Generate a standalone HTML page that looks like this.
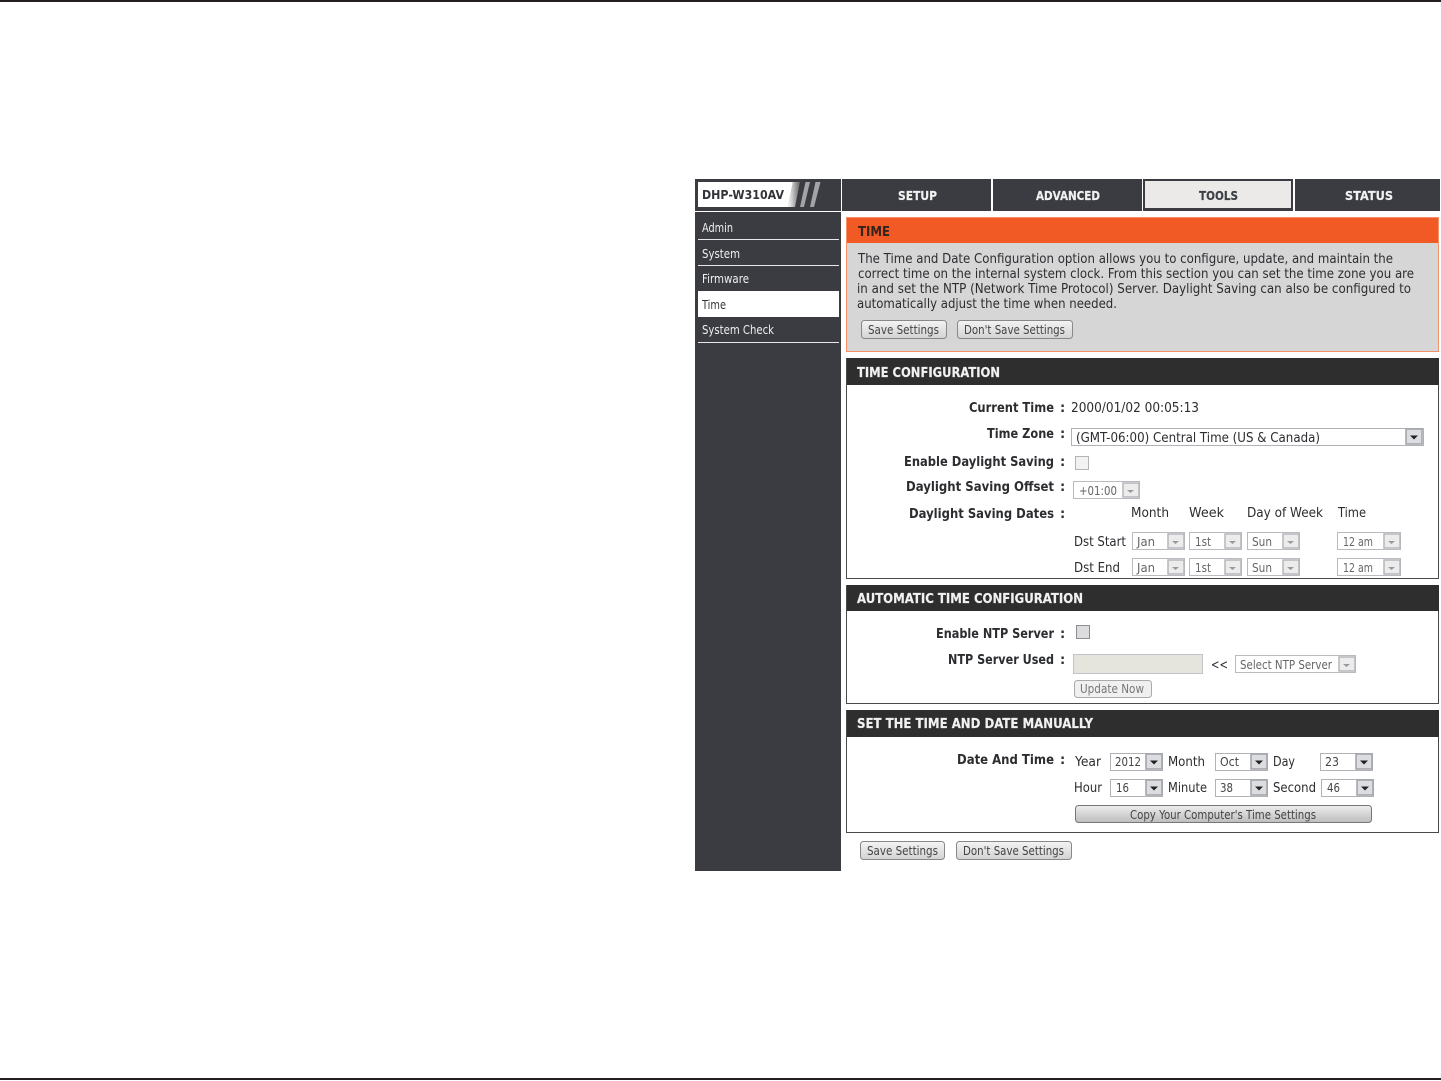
<!DOCTYPE html>
<html><head><meta charset="utf-8"><style>
html,body{margin:0;padding:0;background:#fff;width:1441px;height:1081px;overflow:hidden}
svg{display:block}
text{font-family:"DejaVu Sans","Liberation Sans",sans-serif;white-space:pre}
.b{font-size:13px;fill:#2c2d30}
.l{font-size:13px;font-weight:bold;fill:#2c2d30;text-anchor:start}
.h{font-size:13px;font-weight:bold;fill:#f1f1f1;stroke:#f1f1f1;stroke-width:.2}
.t{font-size:12px;font-weight:bold;fill:#f1f1f1;stroke:#f1f1f1;stroke-width:.2}
.n{font-size:12px;fill:#f0f0f0}
.s{font-size:12px;fill:#444}
.g{font-size:12px;fill:#666}
.dis{fill:#777;font-size:12px}
</style></head><body>
<svg width="1441" height="1081" viewBox="0 0 1441 1081" xmlns="http://www.w3.org/2000/svg">
<defs>
<linearGradient id="bt" x1="0" y1="0" x2="0" y2="1"><stop offset="0" stop-color="#f4f4f4"/><stop offset="1" stop-color="#d2d2d2"/></linearGradient>
<linearGradient id="bt2" x1="0" y1="0" x2="0" y2="1"><stop offset="0" stop-color="#ededed"/><stop offset="1" stop-color="#bdbdbd"/></linearGradient>
<linearGradient id="fade" x1="0" y1="0" x2="1" y2="0"><stop offset="0" stop-color="#fff"/><stop offset="1" stop-color="#666"/></linearGradient>
<g id="dd"><rect x="1" y="1" width="16" height="15" fill="#dcdde0" stroke="#a4a6ab" stroke-width="1.600"/><path d="M5 7.500h8l-4 4z" fill="#222"/></g>
<g id="dl"><rect x="1" y="1" width="16" height="14" fill="#ececec" stroke="#b4b6bb" stroke-width="1.500"/><path d="M5 8h7l-3.500 3z" fill="#999"/></g>
</defs>
<rect x="0" y="0" width="1441" height="2" fill="#231f20"/>
<rect x="0" y="1078" width="1441" height="2" fill="#231f20"/>

<!-- header -->
<rect x="695" y="179" width="146" height="32" fill="#3a3c41"/>
<path d="M698 182H793L788 207H698z" fill="#fff"/>
<path d="M793 182L800 182L795 207L788 207z" fill="url(#fade)"/>
<path d="M805.500 182h4.500l-6 25h-4zM815.500 182h5l-6.500 25h-4z" fill="#a3a4a7"/>
<text x="702" y="199" textLength="82" lengthAdjust="spacingAndGlyphs" style="font-size:12px;font-weight:bold;fill:#33343a">DHP-W310AV</text>
<rect x="842" y="179" width="149" height="32" fill="#3a3c41"/>
<rect x="993" y="179" width="149" height="32" fill="#3a3c41"/>
<rect x="1143" y="179" width="150" height="32" fill="#3a3c41"/>
<rect x="1145" y="181" width="146" height="27" fill="#eceae8"/>
<rect x="1295" y="179" width="145" height="32" fill="#3a3c41"/>
<text class="t" x="898" y="200" textLength="39" lengthAdjust="spacingAndGlyphs">SETUP</text>
<text class="t" x="1036" y="200" textLength="64" lengthAdjust="spacingAndGlyphs">ADVANCED</text>
<text class="t" x="1199" y="200" textLength="39" lengthAdjust="spacingAndGlyphs" style="fill:#3c3f46;stroke:#3c3f46">TOOLS</text>
<text class="t" x="1345" y="200" textLength="48" lengthAdjust="spacingAndGlyphs">STATUS</text>

<!-- sidebar -->
<rect x="695" y="212" width="146" height="659" fill="#3a3c41"/>
<rect x="698" y="239" width="141" height="1" fill="#e8e8e8"/>
<rect x="698" y="265" width="141" height="1" fill="#e8e8e8"/>
<rect x="698" y="291" width="141" height="26" fill="#fff"/>
<rect x="698" y="342" width="141" height="1" fill="#e8e8e8"/>
<text class="n" x="702" y="232" textLength="31" lengthAdjust="spacingAndGlyphs">Admin</text>
<text class="n" x="702" y="258" textLength="38" lengthAdjust="spacingAndGlyphs">System</text>
<text class="n" x="702" y="283" textLength="47" lengthAdjust="spacingAndGlyphs">Firmware</text>
<text class="n" x="702" y="309" textLength="24" lengthAdjust="spacingAndGlyphs" style="fill:#33353a">Time</text>
<text class="n" x="702" y="334" textLength="72" lengthAdjust="spacingAndGlyphs">System Check</text>

<!-- TIME box -->
<rect x="846" y="217" width="593" height="135" fill="#d6d6d6"/>
<rect x="846.500" y="217.500" width="592" height="134" fill="none" stroke="#f4916a"/>
<rect x="847" y="218" width="591" height="25" fill="#f15a24"/>
<text x="858" y="236" textLength="32" lengthAdjust="spacingAndGlyphs" style="font-size:13px;font-weight:bold;fill:#33241e">TIME</text>
<text class="b" x="858" y="263" textLength="535" lengthAdjust="spacingAndGlyphs">The Time and Date Configuration option allows you to configure, update, and maintain the</text>
<text class="b" x="858" y="278" textLength="556" lengthAdjust="spacingAndGlyphs">correct time on the internal system clock. From this section you can set the time zone you are</text>
<text class="b" x="857" y="293" textLength="554" lengthAdjust="spacingAndGlyphs">in and set the NTP (Network Time Protocol) Server. Daylight Saving can also be configured to</text>
<text class="b" x="857" y="308" textLength="260" lengthAdjust="spacingAndGlyphs">automatically adjust the time when needed.</text>

<rect x="861.500" y="320.500" width="85" height="18" rx="3" fill="url(#bt)" stroke="#888"/>
<text class="s" x="868" y="334" textLength="71" lengthAdjust="spacingAndGlyphs">Save Settings</text>
<rect x="957.500" y="320.500" width="115" height="18" rx="3" fill="url(#bt)" stroke="#888"/>
<text class="s" x="964" y="334" textLength="101" lengthAdjust="spacingAndGlyphs">Don't Save Settings</text>

<!-- TIME CONFIGURATION -->
<rect x="846.500" y="358.500" width="592" height="220" fill="#fff" stroke="#4a4a4a"/>
<rect x="847" y="358" width="592" height="27" fill="#2e2e2e"/>
<text class="h" x="857" y="377" textLength="143" lengthAdjust="spacingAndGlyphs">TIME CONFIGURATION</text>
<text class="l" x="969" y="412" textLength="85" lengthAdjust="spacingAndGlyphs">Current Time</text>
<text class="l" x="1060" y="412">:</text>
<text class="l" x="987" y="438" textLength="67" lengthAdjust="spacingAndGlyphs">Time Zone</text>
<text class="l" x="1060" y="438">:</text>
<text class="l" x="904" y="466" textLength="150" lengthAdjust="spacingAndGlyphs">Enable Daylight Saving</text>
<text class="l" x="1060" y="466">:</text>
<text class="l" x="906" y="491" textLength="148" lengthAdjust="spacingAndGlyphs">Daylight Saving Offset</text>
<text class="l" x="1060" y="491">:</text>
<text class="l" x="909" y="518" textLength="145" lengthAdjust="spacingAndGlyphs">Daylight Saving Dates</text>
<text class="l" x="1060" y="518">:</text>
<text class="b" x="1071" y="412" textLength="128" lengthAdjust="spacingAndGlyphs">2000/01/02 00:05:13</text>

<rect x="1071.500" y="428.500" width="352" height="17" fill="#fff" stroke="#b0b2b8"/>
<text class="b" x="1076" y="442" textLength="244" lengthAdjust="spacingAndGlyphs">(GMT-06:00) Central Time (US &amp; Canada)</text>
<use href="#dd" x="1405" y="428"/>
<rect x="1075.500" y="456.500" width="13" height="13" fill="#f2f2f2" stroke="#b4b4b4"/>

<rect x="1073.500" y="481.500" width="66" height="17" fill="#fff" stroke="#b9bbc0"/>
<text class="g" x="1079" y="495" textLength="38" lengthAdjust="spacingAndGlyphs">+01:00</text>
<use href="#dl" x="1122" y="482"/>

<text class="b" x="1131" y="517" textLength="38" lengthAdjust="spacingAndGlyphs">Month</text>
<text class="b" x="1189" y="517" textLength="35" lengthAdjust="spacingAndGlyphs">Week</text>
<text class="b" x="1247" y="517" textLength="76" lengthAdjust="spacingAndGlyphs">Day of Week</text>
<text class="b" x="1338" y="517" textLength="28" lengthAdjust="spacingAndGlyphs">Time</text>
<text class="b" x="1074" y="546" textLength="52" lengthAdjust="spacingAndGlyphs">Dst Start</text>
<text class="b" x="1074" y="572" textLength="46" lengthAdjust="spacingAndGlyphs">Dst End</text>

<g>
<rect x="1132.500" y="532.500" width="52" height="17" fill="#fff" stroke="#b9bbc0"/><text class="g" x="1137" y="546" textLength="18" lengthAdjust="spacingAndGlyphs">Jan</text><use href="#dl" x="1167" y="533"/>
<rect x="1189.500" y="532.500" width="52" height="17" fill="#fff" stroke="#b9bbc0"/><text class="g" x="1195" y="546" textLength="16" lengthAdjust="spacingAndGlyphs">1st</text><use href="#dl" x="1224" y="533"/>
<rect x="1247.500" y="532.500" width="52" height="17" fill="#fff" stroke="#b9bbc0"/><text class="g" x="1252" y="546" textLength="20" lengthAdjust="spacingAndGlyphs">Sun</text><use href="#dl" x="1282" y="533"/>
<rect x="1337.500" y="532.500" width="63" height="17" fill="#fff" stroke="#b9bbc0"/><text class="g" x="1343" y="546" textLength="30" lengthAdjust="spacingAndGlyphs">12 am</text><use href="#dl" x="1383" y="533"/>
<rect x="1132.500" y="558.500" width="52" height="17" fill="#fff" stroke="#b9bbc0"/><text class="g" x="1137" y="572" textLength="18" lengthAdjust="spacingAndGlyphs">Jan</text><use href="#dl" x="1167" y="559"/>
<rect x="1189.500" y="558.500" width="52" height="17" fill="#fff" stroke="#b9bbc0"/><text class="g" x="1195" y="572" textLength="16" lengthAdjust="spacingAndGlyphs">1st</text><use href="#dl" x="1224" y="559"/>
<rect x="1247.500" y="558.500" width="52" height="17" fill="#fff" stroke="#b9bbc0"/><text class="g" x="1252" y="572" textLength="20" lengthAdjust="spacingAndGlyphs">Sun</text><use href="#dl" x="1282" y="559"/>
<rect x="1337.500" y="558.500" width="63" height="17" fill="#fff" stroke="#b9bbc0"/><text class="g" x="1343" y="572" textLength="30" lengthAdjust="spacingAndGlyphs">12 am</text><use href="#dl" x="1383" y="559"/>
</g>

<!-- AUTOMATIC -->
<rect x="846.500" y="585.500" width="592" height="118" fill="#fff" stroke="#4a4a4a"/>
<rect x="847" y="585" width="592" height="26" fill="#2e2e2e"/>
<text class="h" x="857" y="603" textLength="226" lengthAdjust="spacingAndGlyphs">AUTOMATIC TIME CONFIGURATION</text>
<text class="l" x="936" y="638" textLength="118" lengthAdjust="spacingAndGlyphs">Enable NTP Server</text>
<text class="l" x="1060" y="638">:</text>
<text class="l" x="948" y="664" textLength="106" lengthAdjust="spacingAndGlyphs">NTP Server Used</text>
<text class="l" x="1060" y="664">:</text>
<rect x="1076.500" y="625.500" width="13" height="13" fill="#dcdcdc" stroke="#8a8d92"/>
<rect x="1073.500" y="654.500" width="129" height="19" fill="#e6e5dd" stroke="#c2c4c6"/>
<text class="b" x="1211" y="669" textLength="17" lengthAdjust="spacingAndGlyphs">&lt;&lt;</text>
<rect x="1235.500" y="655.500" width="120" height="17" fill="#fff" stroke="#b9bbc0"/>
<text class="g" x="1240" y="669" textLength="92" lengthAdjust="spacingAndGlyphs">Select NTP Server</text>
<use href="#dl" x="1338" y="656"/>
<rect x="1074.500" y="680.500" width="77" height="17" rx="3" fill="#f0f0f0" stroke="#aaa"/>
<text class="dis" x="1080" y="693" textLength="64" lengthAdjust="spacingAndGlyphs">Update Now</text>

<!-- MANUAL -->
<rect x="846.500" y="710.500" width="592" height="122" fill="#fff" stroke="#4a4a4a"/>
<rect x="847" y="710" width="592" height="27" fill="#2e2e2e"/>
<text class="h" x="857" y="728" textLength="236" lengthAdjust="spacingAndGlyphs">SET THE TIME AND DATE MANUALLY</text>
<text class="l" x="957" y="764" textLength="97" lengthAdjust="spacingAndGlyphs">Date And Time</text>
<text class="l" x="1060" y="764">:</text>
<text class="b" x="1075" y="766" textLength="26" lengthAdjust="spacingAndGlyphs">Year</text>
<text class="b" x="1168" y="766" textLength="37" lengthAdjust="spacingAndGlyphs">Month</text>
<text class="b" x="1273" y="766" textLength="22" lengthAdjust="spacingAndGlyphs">Day</text>
<text class="b" x="1074" y="792" textLength="28" lengthAdjust="spacingAndGlyphs">Hour</text>
<text class="b" x="1168" y="792" textLength="39" lengthAdjust="spacingAndGlyphs">Minute</text>
<text class="b" x="1273" y="792" textLength="43" lengthAdjust="spacingAndGlyphs">Second</text>
<g>
<rect x="1110.500" y="753.500" width="52" height="17" fill="#fff" stroke="#b0b2b8"/><text class="s" x="1115" y="766" textLength="26" lengthAdjust="spacingAndGlyphs">2012</text><use href="#dd" x="1145" y="753"/>
<rect x="1215.500" y="753.500" width="52" height="17" fill="#fff" stroke="#b0b2b8"/><text class="s" x="1220" y="766" textLength="19" lengthAdjust="spacingAndGlyphs">Oct</text><use href="#dd" x="1250" y="753"/>
<rect x="1320.500" y="753.500" width="52" height="17" fill="#fff" stroke="#b0b2b8"/><text class="s" x="1325" y="766" textLength="14" lengthAdjust="spacingAndGlyphs">23</text><use href="#dd" x="1355" y="753"/>
<rect x="1110.500" y="779.500" width="52" height="17" fill="#fff" stroke="#b0b2b8"/><text class="s" x="1116" y="792" textLength="13" lengthAdjust="spacingAndGlyphs">16</text><use href="#dd" x="1145" y="779"/>
<rect x="1215.500" y="779.500" width="52" height="17" fill="#fff" stroke="#b0b2b8"/><text class="s" x="1220" y="792" textLength="13" lengthAdjust="spacingAndGlyphs">38</text><use href="#dd" x="1250" y="779"/>
<rect x="1321.500" y="779.500" width="52" height="17" fill="#fff" stroke="#b0b2b8"/><text class="s" x="1327" y="792" textLength="13" lengthAdjust="spacingAndGlyphs">46</text><use href="#dd" x="1356" y="779"/>
</g>
<rect x="1075.500" y="805.500" width="296" height="17" rx="3" fill="url(#bt2)" stroke="#777"/>
<text class="s" x="1130" y="819" textLength="186" lengthAdjust="spacingAndGlyphs">Copy Your Computer's Time Settings</text>

<!-- bottom buttons -->
<rect x="860.500" y="841.500" width="84" height="18" rx="3" fill="url(#bt)" stroke="#888"/>
<text class="s" x="867" y="855" textLength="71" lengthAdjust="spacingAndGlyphs">Save Settings</text>
<rect x="956.500" y="841.500" width="115" height="18" rx="3" fill="url(#bt)" stroke="#888"/>
<text class="s" x="963" y="855" textLength="101" lengthAdjust="spacingAndGlyphs">Don't Save Settings</text>
</svg>
</body></html>
